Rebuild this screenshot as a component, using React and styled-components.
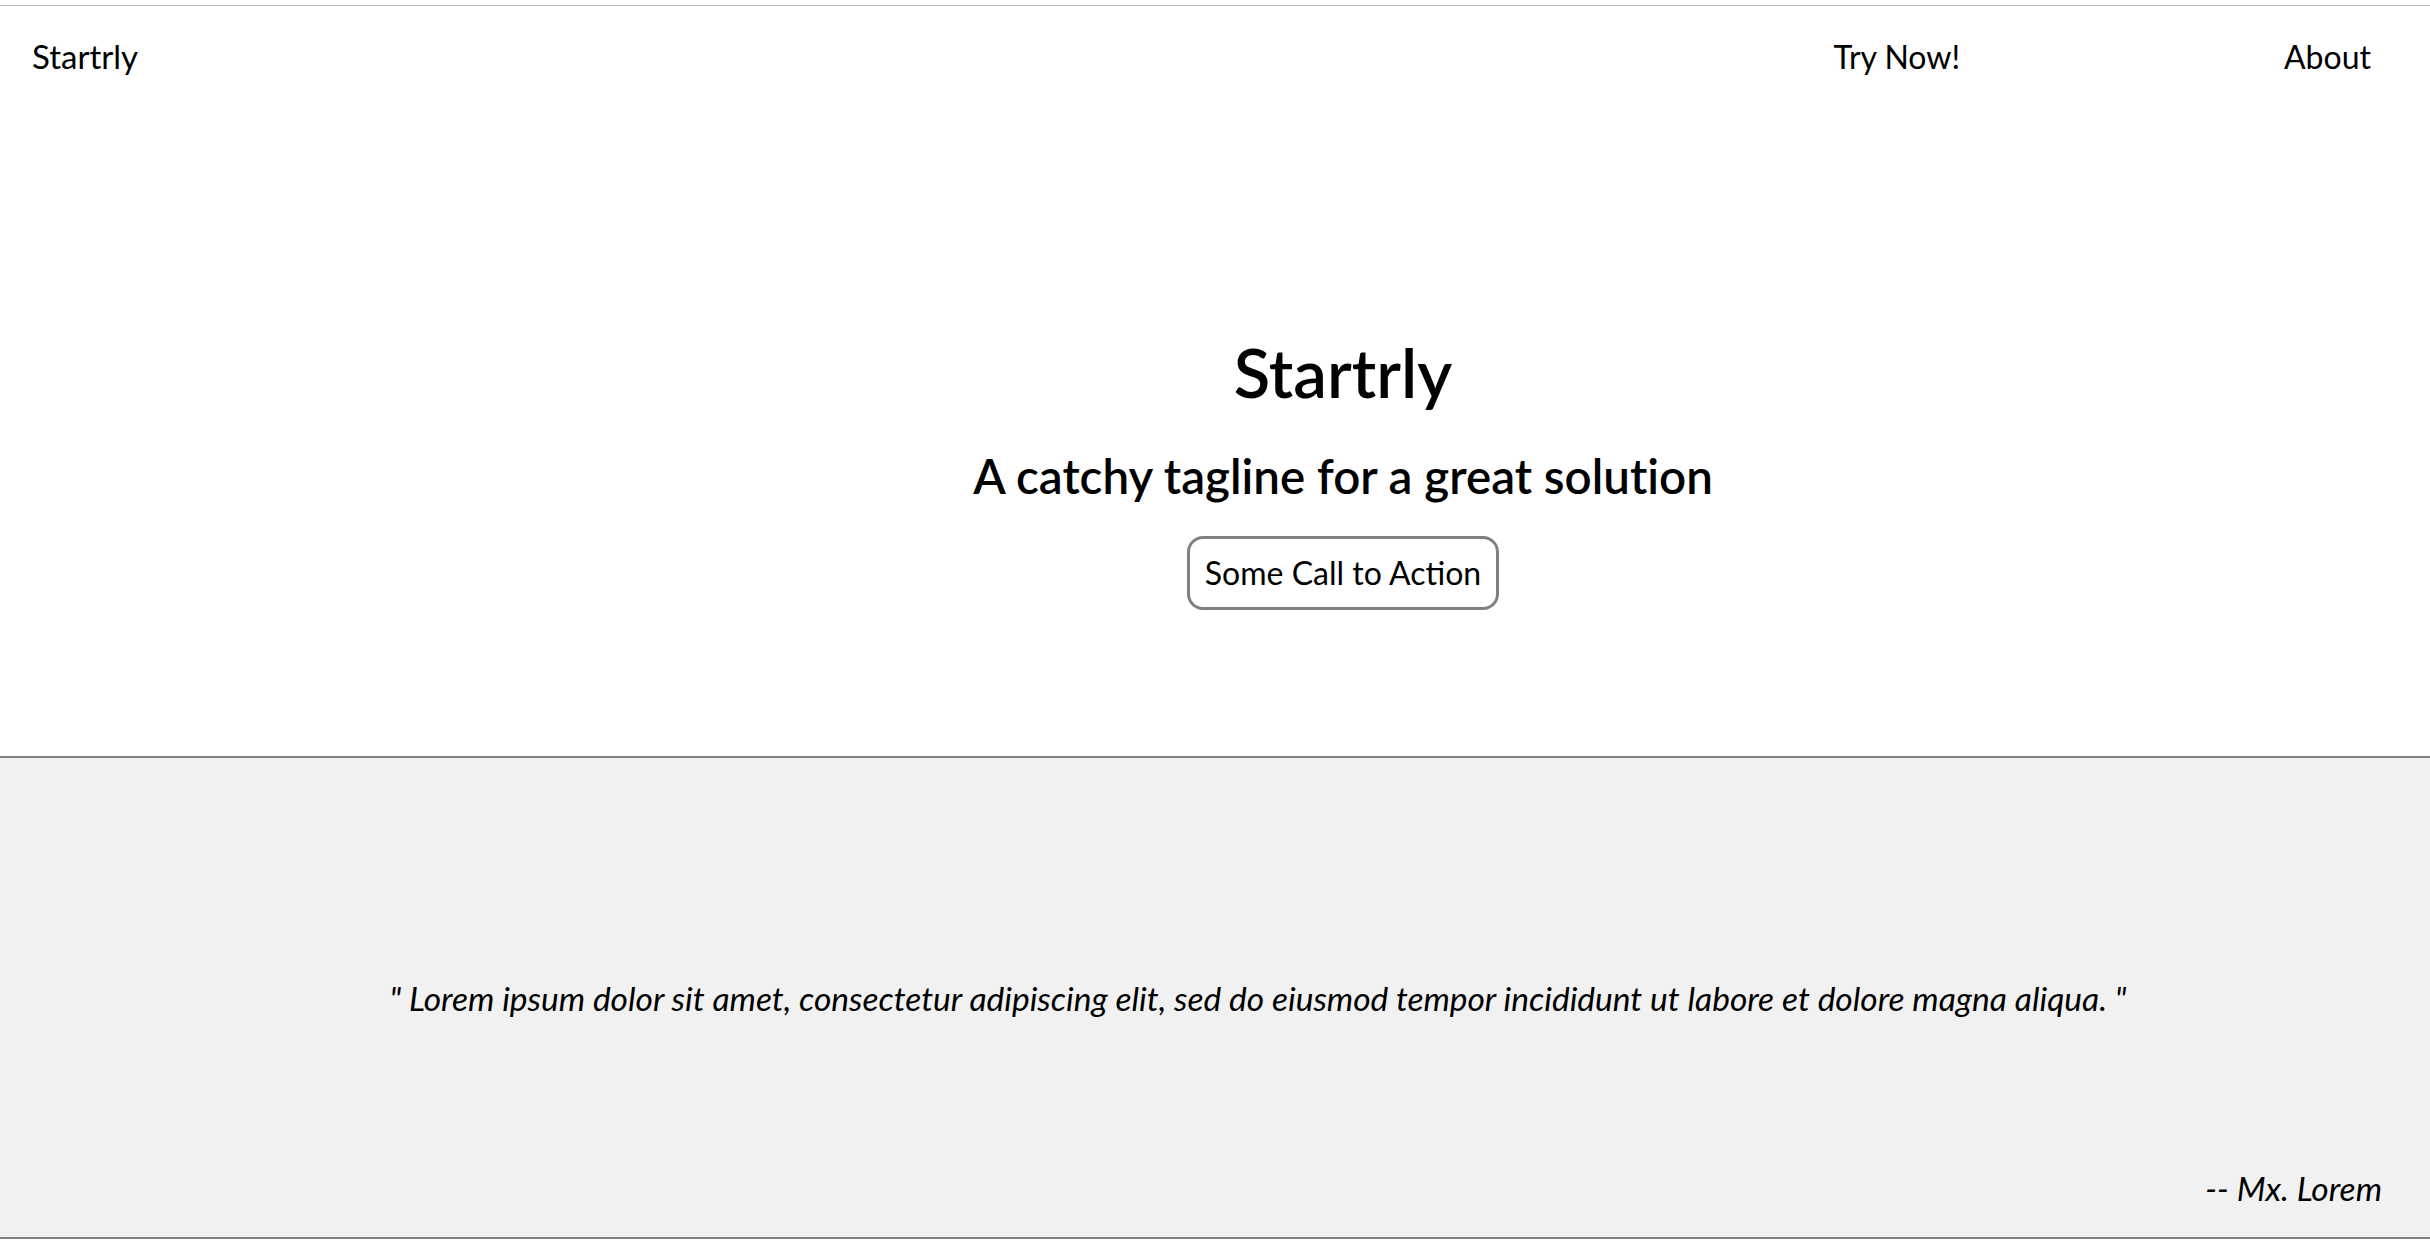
import React from "react";
import styled, { createGlobalStyle } from "styled-components";

const GlobalStyle = createGlobalStyle`
  html, body {
    margin: 0;
    padding: 0;
    background: #ffffff;
  }
  body {
    font-family: Lato, "Open Sans", sans-serif;
    font-size: 32px;
    color: #000;
    font-variant-ligatures: no-common-ligatures;
  }
`;

export default function App() {
  return (
    <>
      <GlobalStyle />
      <Page>
        <Nav>
          <Brand>Startrly</Brand>
          <Links>
            <NavLink href="#">Try Now!</NavLink>
            <NavLink href="#">About</NavLink>
          </Links>
        </Nav>

        <Hero>
          <Title>Startrly</Title>
          <Tagline>A catchy tagline for a great solution</Tagline>
          <Cta>Some Call to Action</Cta>
        </Hero>

        <Testimonial>
          <Quote>
            " Lorem ipsum dolor sit amet, consectetur adipiscing elit, sed do
            eiusmod tempor incididunt ut labore et dolore magna aliqua. "
          </Quote>
          <Author>-- Mx. Lorem</Author>
        </Testimonial>
      </Page>
    </>
  );
}

const Page = styled.div`
  padding-top: 5px;
  display: flex;
  flex-direction: column;
`;

const Nav = styled.nav`
  display: flex;
  align-items: center;
  justify-content: space-between;
  height: 100px;
  padding: 0 59px 0 32px;
  border-top: 1px solid #bcbcbc;
`;

const Brand = styled.div`
  font-size: 33px;
`;

const Links = styled.div`
  display: flex;
  gap: 324px;
`;

const NavLink = styled.a`
  color: #000;
  text-decoration: none;
  font-size: 32px;
`;

const Hero = styled.header`
  display: flex;
  flex-direction: column;
  align-items: center;
  padding: 228px 0 146px 256px;
  border-bottom: 2px solid #808080;
`;

const Title = styled.h1`
  margin: 0;
  font-size: 67px;
  font-weight: 600;
  line-height: 77px;
`;

const Tagline = styled.h2`
  margin: 36px 0 0;
  font-size: 47.5px;
  font-weight: 600;
  line-height: 58px;
`;

const Cta = styled.button`
  margin-top: 31px;
  font-family: Lato, "Open Sans", sans-serif;
  font-size: 32px;
  line-height: 38px;
  color: #000;
  background: #fff;
  border: 3px solid #808080;
  border-radius: 16px;
  padding: 15px 15px;
  cursor: pointer;
`;

const Testimonial = styled.section`
  display: flex;
  flex-direction: column;
  height: 481px;
  box-sizing: border-box;
  padding: 221px 48px 30px 134px;
  background: #f1f1f1;
  border-bottom: 2px solid #808080;
`;

const Quote = styled.blockquote`
  margin: 0;
  font-style: italic;
  font-size: 33.5px;
  line-height: 38px;
  text-align: center;
`;

const Author = styled.div`
  margin-top: auto;
  align-self: flex-end;
  font-style: italic;
  font-size: 33.5px;
  line-height: 38px;
`;
